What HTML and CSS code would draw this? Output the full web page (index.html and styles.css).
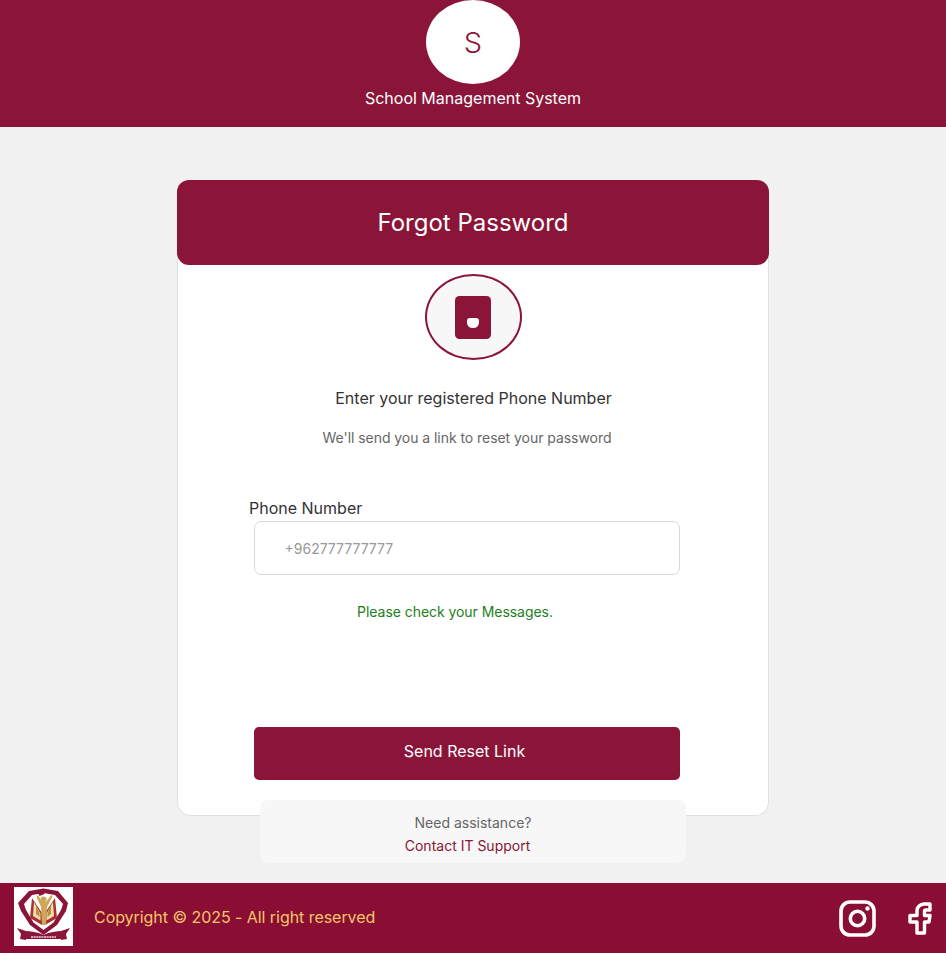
FILE: index.html
```html
<!DOCTYPE html>
<html lang="en">
<head>
    <meta charset="UTF-8">
    <meta name="viewport" content="width=device-width, initial-scale=1.0">
    <title>Forgot Password</title>
    <link rel="stylesheet" href="styles.css">
</head>
<body>

    <!-- Top banner -->
    <header class="top-bar">
        <div class="school-logo">S</div>
        <p class="school-name">School Management System</p>
    </header>

    <main class="page">
        <section class="card">
            <h1 class="card-title">Forgot Password</h1>

            <div class="phone-circle">
                <svg class="phone-icon" width="36" height="43" viewBox="0 0 36 43">
                    <rect width="36" height="43" rx="4.500" fill="#8a1538"/>
                    <path d="M15 22h6a3 3 0 0 1 3 3v1.500a5.500 5.500 0 0 1-5.500 5.500h-1a5.500 5.500 0 0 1-5.500-5.500V25a3 3 0 0 1 3-3z" fill="#fff"/>
                </svg>
            </div>

            <p class="lead">Enter your registered Phone Number</p>
            <p class="sub">We'll send you a link to reset your password</p>

            <form class="reset-form">
                <label class="field-label" for="phone">Phone Number</label>
                <input class="field-input" id="phone" type="text" placeholder="+962777777777">
                <p class="notice">Please check your Messages.</p>
                <button class="send-btn" type="button">Send Reset Link</button>
            </form>
        </section>

        <!-- Overlaps the bottom edge of the card -->
        <div class="support">
            <p class="support-text">Need assistance?</p>
            <a class="support-link" href="#">Contact IT Support</a>
        </div>
    </main>

    <footer class="footer">
        <svg class="footer-logo" width="59" height="59" viewBox="0 0 59 59">
            <rect width="59" height="59" fill="#fff"/>
            <!-- crest outline -->
            <path d="M29.500 1.500 44 4l10 12-2 8-9 14-13.500 10L16 38 7 24l-3-8L15 4z" fill="#8a1538"/>
            <path d="M29.500 6 41 8l8 9-2 6-7.500 12.500L29.500 43l-10-7.500L12 23l-2-6 8-9z" fill="#fff"/>
            <!-- open book -->
            <path d="M18 11l10 15v12L16 31z" fill="#a8322f"/>
            <path d="M41 11 31 26v12l12-7z" fill="#a8322f"/>
            <path d="M20 15l6.500 11.500v7L19 29z" fill="#f1dcae"/>
            <path d="M39 15l-6.500 11.500v7L40 29z" fill="#f1dcae"/>
            <path d="M22 18l3.500 8v4L22 27zM37 18l-3.500 8v4L37 27z" fill="#b9913f"/>
            <!-- figure with raised arms -->
            <path d="M24 8l4 7h4l5-7 1.500 1.500L33 20l-1 18h-4l-1-18-4.500-10z" fill="#cda85b"/>
            <circle cx="29.500" cy="12.500" r="3" fill="#cda85b"/>
            <path d="M24 6l6-1 .5 2-5 2z" fill="#8a1538"/>
            <!-- ribbon -->
            <path d="M3 41l9 3v9l-6-1 1-5z" fill="#8a1538"/>
            <path d="M56 41l-9 3v9l6-1-1-5z" fill="#8a1538"/>
            <path d="M11 44c6 0 12 1 18.500 4 6.500-3 12.500-4 18.500-4v8H11z" fill="#8a1538"/>
            <path d="M17 50h25" stroke="#ecd5da" stroke-width="1.600" stroke-dasharray="2 .6"/>
        </svg>
        <p class="copyright">Copyright © 2025 - All right reserved</p>
        <div class="social">
            <svg width="37" height="37" viewBox="0 0 37 37" fill="none" stroke="#fff" stroke-width="3.600">
                <rect x="2" y="2" width="33" height="33" rx="9"/>
                <circle cx="18.500" cy="18.500" r="7.200"/>
                <circle cx="28.500" cy="8.500" r="2.200" fill="#fff" stroke="none"/>
            </svg>
            <svg width="24" height="33" viewBox="0 0 24 33" fill="none" stroke="#fff" stroke-width="3.400" stroke-linejoin="round">
                <path d="M22 2h-6a7 7 0 0 0-7 7v4.500H2V20h7v11h7.500V20H21l1-6.500h-5.500V9.500A1.500 1.500 0 0 1 18 8h4z"/>
            </svg>
        </div>
    </footer>

</body>
</html>
```

FILE: styles.css
```css
* {
    box-sizing: border-box;
}

body {
    font-family: 'Inter', sans-serif;
    background-color: #f1f1f1;
    color: #333;
    margin: 0;
}

p {
    margin: 0;
}

.top-bar {
    background-color: #8a1538;
    height: 127px;
    display: flex;
    flex-direction: column;
    align-items: center;
}

.school-logo {
    width: 94px;
    height: 84px;
    padding-top: 1px;
    border-radius: 50%;
    background-color: #fff;
    color: #8a1538;
    font-size: 29px;
    font-weight: 300;
    display: flex;
    align-items: center;
    justify-content: center;
}

.school-name {
    color: #fff;
    font-size: 16px;
    line-height: 20px;
    margin-top: 4px;
}

.page {
    display: flex;
    flex-direction: column;
    align-items: center;
    padding-top: 53px;
    padding-bottom: 20px;
}

.card {
    width: 592px;
    height: 636px;
    background-color: #fff;
    border: 1px solid #e0e0e0;
    border-top: none;
    border-radius: 14px;
    display: flex;
    flex-direction: column;
    align-items: center;
}

.card-title {
    width: 592px;
    height: 85px;
    margin: 0 -1px;
    background-color: #8a1538;
    border-radius: 12px;
    color: #fff;
    font-size: 24px;
    font-weight: 400;
    display: flex;
    align-items: center;
    justify-content: center;
}

.phone-circle {
    width: 97px;
    height: 86px;
    margin-top: 9px;
    border: 2px solid #8a1538;
    border-radius: 50%;
    background-color: #f7f7f7;
    display: flex;
    align-items: center;
    justify-content: center;
}

.lead {
    font-size: 16px;
    line-height: 20px;
    margin-top: 28px;
    padding-left: 1px;
}

.sub {
    font-size: 14px;
    line-height: 18px;
    color: #666;
    letter-spacing: -0.05px;
    margin-top: 21px;
    margin-right: 12px;
}

.reset-form {
    width: 426px;
    margin-top: 51px;
    margin-right: 12px;
    display: flex;
    flex-direction: column;
}

.field-label {
    font-size: 16px;
    line-height: 20px;
    margin-left: -5px;
}

.field-input {
    height: 54px;
    margin-top: 3px;
    padding: 0 29.5px;
    border: 1.5px solid #d8d8d8;
    border-radius: 7px;
    background-color: #fff;
    font-family: inherit;
    font-size: 14px;
}

.field-input::placeholder {
    color: #999;
}

.notice {
    color: #1e7e22;
    font-size: 14px;
    line-height: 18px;
    letter-spacing: -0.05px;
    text-align: center;
    margin-top: 28px;
    padding-right: 24px;
}

.send-btn {
    height: 53px;
    margin-top: 106px;
    padding: 0 5px 6px 0;
    border: none;
    border-radius: 5px;
    background-color: #8a1538;
    color: #fff;
    font-family: inherit;
    font-size: 16px;
    cursor: pointer;
}

.support {
    position: relative;
    width: 426px;
    height: 63px;
    margin-top: -16px;
    padding-top: 14px;
    border-radius: 8px;
    background-color: #f7f7f7;
    text-align: center;
    font-size: 14px;
    line-height: 18px;
}

.support-text {
    color: #666;
}

.support-link {
    display: block;
    margin-top: 5px;
    padding-right: 11px;
    color: #8a1538;
    text-decoration: none;
}

.footer {
    height: 70px;
    background-color: #8a0e33;
    padding: 0 14px;
    display: flex;
    align-items: center;
}

.footer-logo {
    margin-bottom: 4px;
}

.copyright {
    color: #f4c56c;
    font-size: 16px;
    letter-spacing: -0.05px;
    margin-left: 21px;
    margin-bottom: 2px;
}

.social {
    margin-left: auto;
    display: flex;
    align-items: center;
    gap: 32px;
}
```
